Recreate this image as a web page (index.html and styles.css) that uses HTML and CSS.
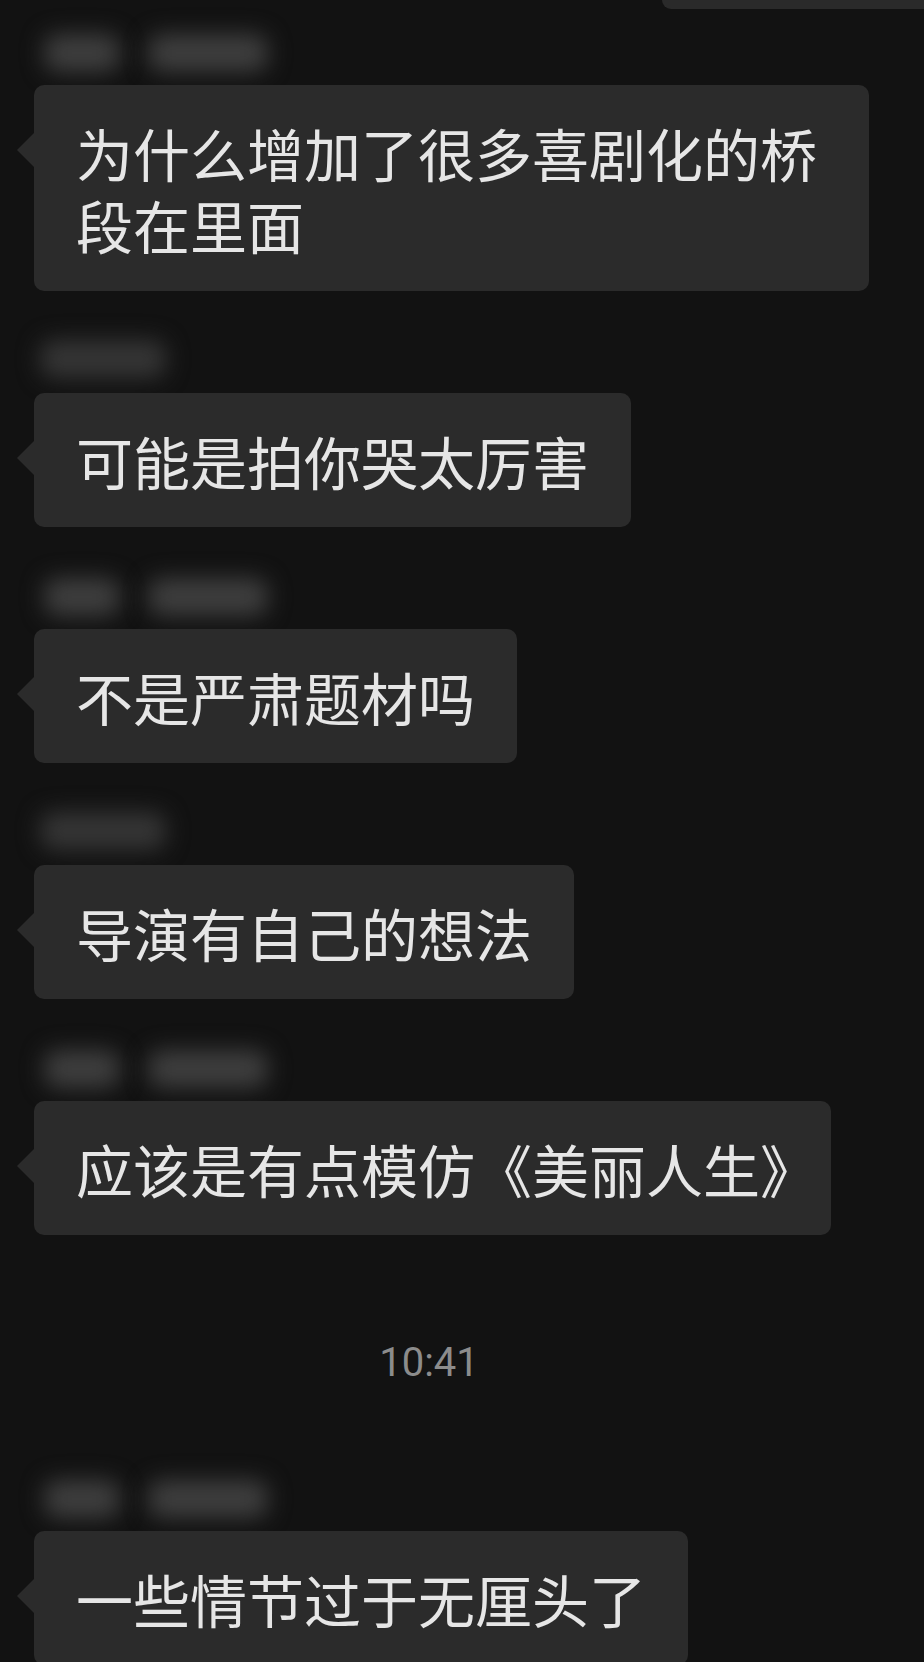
FILE: index.html
```html
<!DOCTYPE html>
<html lang="zh-CN">
<head>
<meta charset="utf-8">
<title>聊天记录</title>
<link rel="stylesheet" href="styles.css">
</head>
<body>
<div class="chat">
  <div class="prev-bubble"></div>

  <div class="msg">
    <div class="name name-long"><span class="blob b1"></span><span class="blob b2"></span></div>
    <div class="bubble bubble-wrap">为什么增加了很多喜剧化的桥段在里面</div>
  </div>

  <div class="msg">
    <div class="name name-short"><span class="blob b3"></span></div>
    <div class="bubble">可能是拍你哭太厉害</div>
  </div>

  <div class="msg">
    <div class="name name-long"><span class="blob b1"></span><span class="blob b2"></span></div>
    <div class="bubble">不是严肃题材吗</div>
  </div>

  <div class="msg">
    <div class="name name-short"><span class="blob b3"></span></div>
    <div class="bubble">导演有自己的想法</div>
  </div>

  <div class="msg">
    <div class="name name-long"><span class="blob b1"></span><span class="blob b2"></span></div>
    <div class="bubble">应该是有点模仿《美丽人生<span class="half">》</span></div>
  </div>

  <div class="time">10:41</div>

  <div class="msg">
    <div class="name name-long"><span class="blob b1"></span><span class="blob b2"></span></div>
    <div class="bubble">一些情节过于无厘头了</div>
  </div>
</div>
</body>
</html>
```

FILE: styles.css
```css
html, body {
  margin: 0;
  padding: 0;
  background: #121212;
}

body {
  width: 924px;
  height: 1662px;
  overflow: hidden;
  font-family: "Noto Sans CJK SC", "Noto Sans", sans-serif;
}

.chat {
  display: flex;
  flex-direction: column;
  gap: 49px;
}

.prev-bubble {
  align-self: flex-end;
  width: 262px;
  height: 9px;
  background: #2a2a2a;
  border-bottom-left-radius: 14px;
  margin-bottom: -26px;
}

.msg {
  display: flex;
  flex-direction: column;
  align-items: flex-start;
  padding-left: 34px;
}

.name {
  position: relative;
  height: 42px;
  width: 260px;
  margin-bottom: 11px;
}

.blob {
  position: absolute;
  top: 2px;
  height: 38px;
  border-radius: 14px;
  background: #3e3e3e;
  filter: blur(11px);
}

.b1 {
  left: 10px;
  width: 76px;
}

.b2 {
  left: 114px;
  width: 120px;
}

.b3 {
  left: 6px;
  width: 126px;
  top: 0;
  background: #353535;
}

.bubble {
  position: relative;
  max-width: 835px;
  box-sizing: border-box;
  padding: 31px 42px;
  background: #2b2b2b;
  border-radius: 10px;
  color: #e6e6e6;
  font-size: 57px;
  line-height: 72px;
  font-weight: 400;
}

.bubble::before {
  content: "";
  position: absolute;
  left: -17px;
  top: 48px;
  border-top: 17px solid transparent;
  border-bottom: 17px solid transparent;
  border-right: 17px solid #2b2b2b;
}

.half {
  font-feature-settings: "halt";
}

.time {
  margin: 55px 0 42px;
  padding-right: 66px;
  text-align: center;
  font-family: Roboto, "Liberation Sans", sans-serif;
  font-size: 40px;
  line-height: 48px;
  color: #8c8c8c;
}
```
